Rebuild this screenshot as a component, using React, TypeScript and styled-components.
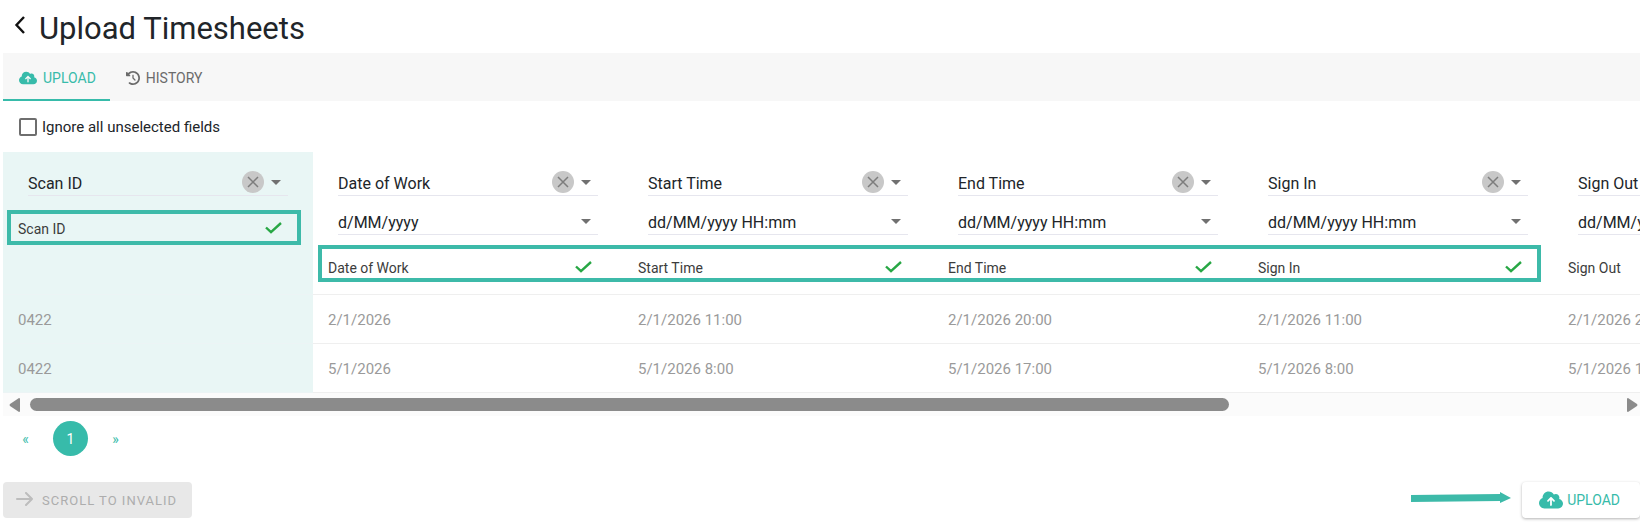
import React, { useState } from "react";
import styled, { createGlobalStyle, css } from "styled-components";
import { FaCloudArrowUp, FaClockRotateLeft } from "react-icons/fa6";

const teal = "#37bbaa";

const GlobalStyle = createGlobalStyle`
  *, *::before, *::after { box-sizing: border-box; }
  body {
    margin: 0;
    background: #fff;
    color: #212529;
    font-family: Roboto, "Liberation Sans", sans-serif;
    font-size: 16px;
    overflow-x: hidden;
  }
  button, select, input { font: inherit; color: inherit; }
  button { border: 0; background: none; padding: 0; cursor: pointer; }
`;

const Page = styled.main`
  padding-left: 3px;
`;

const Heading = styled.header`
  display: flex;
  align-items: center;
  height: 53px;
  padding: 4px 0 0 10px;
  gap: 12px;
`;

const BackButton = styled.button`
  display: flex;
  width: 14px;
  height: 24px;
  align-items: center;
  margin-bottom: 8px;
`;

const Title = styled.h1`
  margin: 0;
  font-size: 31px;
  line-height: 40px;
  font-weight: 400;
`;

const Tabs = styled.nav`
  display: flex;
  height: 48px;
  background: #f7f7f7;
`;

const Tab = styled.button<{ $active?: boolean }>`
  display: flex;
  align-items: center;
  gap: 6px;
  padding: 3px 14px 0 16px;
  font-size: 14px;
  color: ${(p) => (p.$active ? teal : "#6b6b6b")};
  border-bottom: 2px solid ${(p) => (p.$active ? teal : "transparent")};
`;

const IgnoreRow = styled.label`
  display: flex;
  align-items: center;
  gap: 5px;
  height: 51px;
  padding: 1px 0 0 16px;
  font-size: 15px;
`;

const Checkbox = styled.input`
  appearance: none;
  width: 18px;
  height: 18px;
  margin: 0;
  border: 2px solid #6e6e6e;
  border-radius: 2px;
  &:checked { background: ${teal}; border-color: ${teal}; }
`;

const TableArea = styled.div`
  position: relative;
  overflow: hidden;
`;

const Table = styled.table`
  table-layout: fixed;
  width: 1860px;
  border-collapse: separate;
  border-spacing: 0;
`;

const cell = css<{ $pinned?: boolean }>`
  width: 310px;
  text-align: left;
  font-weight: 400;
  border-bottom: 1px solid ${(p) => (p.$pinned ? "#ecf4f5" : "#efefef")};
  background: ${(p) => (p.$pinned ? "#e9f6f5" : "#fff")};
`;

const HeadCell = styled.th<{ $pinned?: boolean }>`
  ${cell}
  height: 143px;
  padding: 18px 25px 0;
  vertical-align: top;
`;

const DataCell = styled.td<{ $pinned?: boolean }>`
  ${cell}
  height: 49px;
  padding: 2px 15px 0;
  font-size: 15px;
  color: #9a9a9a;
`;

const Field = styled.div<{ $spaced?: boolean }>`
  display: grid;
  grid-template-columns: 1fr 22px 24px;
  align-items: center;
  height: ${(p) => (p.$spaced ? 39 : 26)}px;
  padding-top: ${(p) => (p.$spaced ? 13 : 0)}px;
  border-bottom: 1px solid #e6e6ee;
`;

const Select = styled.select`
  grid-area: 1 / 1 / 2 / 4;
  appearance: none;
  border: 0;
  padding: 2px 0 0;
  background: transparent;
  line-height: 22px;
  outline: none;
`;

const ClearButton = styled.button`
  grid-area: 1 / 2;
  display: flex;
  align-items: center;
  justify-content: center;
  width: 22px;
  height: 22px;
  margin-bottom: 2px;
  border-radius: 50%;
  background: #c8c8c8;
`;

const Caret = styled.svg`
  grid-area: 1 / 3;
  justify-self: center;
  width: 10px;
  height: 5px;
  margin-bottom: 1px;
  pointer-events: none;
`;

const MatchedName = styled.div`
  display: flex;
  align-items: center;
  justify-content: space-between;
  height: 26px;
  margin: 20px -10px 0;
  padding-right: 16px;
  font-size: 14px;
  color: #3c3c3c;
  svg { margin-bottom: 3px; }
`;

const Highlight = styled.div<{ $x: number; $y: number; $w: number; $h: number }>`
  position: absolute;
  left: ${(p) => p.$x}px;
  top: ${(p) => p.$y}px;
  width: ${(p) => p.$w}px;
  height: ${(p) => p.$h}px;
  border: 4px solid #3dbaa9;
  pointer-events: none;
`;

const ScrollBar = styled.div`
  display: flex;
  align-items: center;
  gap: 10px;
  height: 23px;
  padding: 0 2px 0 6px;
  background: #fbfbfb;
`;

const Track = styled.div`
  flex: 1;
`;

/* Share of the table's full width that is in view. */
const Thumb = styled.div`
  width: calc(100% * 1637 / 2166);
  height: 13px;
  border-radius: 7px;
  background: #8b8b8b;
`;

const Pagination = styled.nav`
  display: flex;
  align-items: center;
  gap: 10px;
  padding: 5px 0 0 5px;
  color: ${teal};
  font-size: 14px;
`;

const PageButton = styled.button<{ $current?: boolean }>`
  width: 35px;
  height: 35px;
  border-radius: 50%;
  ${(p) => p.$current && css`background: ${teal}; color: #fff;`}
`;

const Actions = styled.footer`
  display: flex;
  align-items: center;
  justify-content: space-between;
  padding: 26px 0 7px;
`;

const ActionButton = styled.button`
  display: flex;
  align-items: center;
  height: 36px;
  border-radius: 4px;
  font-size: 14px;
`;

const ScrollButton = styled(ActionButton)`
  gap: 9px;
  padding: 0 15px 0 13px;
  font-size: 13px;
  letter-spacing: 1px;
  background: #e8e8e8;
  color: #adadad;
  svg { margin-bottom: 2px; }
`;

const UploadGroup = styled.div`
  display: flex;
  align-items: center;
  gap: 11px;
`;

const UploadButton = styled(ActionButton)`
  gap: 4px;
  padding: 0 20px 0 17px;
  color: ${teal};
  background: #fff;
  box-shadow: 0 1px 3px rgba(0, 0, 0, 0.3);
`;

type Column = { name: string; format?: string; values: [string, string] };

const dateTime = "dd/MM/yyyy HH:mm";
const columns: Column[] = [
  { name: "Scan ID", values: ["0422", "0422"] },
  { name: "Date of Work", format: "d/MM/yyyy", values: ["2/1/2026", "5/1/2026"] },
  { name: "Start Time", format: dateTime, values: ["2/1/2026 11:00", "5/1/2026 8:00"] },
  { name: "End Time", format: dateTime, values: ["2/1/2026 20:00", "5/1/2026 17:00"] },
  { name: "Sign In", format: dateTime, values: ["2/1/2026 11:00", "5/1/2026 8:00"] },
  { name: "Sign Out", format: dateTime, values: ["2/1/2026 20:00", "5/1/2026 17:00"] },
];

function DownCaret() {
  return (
    <Caret viewBox="0 0 10 5" aria-hidden="true">
      <path d="M0 0h10L5 5z" fill="#707070" />
    </Caret>
  );
}

function CheckMark() {
  return (
    <svg width="17" height="12" viewBox="0 0 17 12" fill="none" stroke="#28a745" strokeWidth="2.4" aria-hidden="true">
      <path d="M1 5.5L6 10.2L16 1" />
    </svg>
  );
}

function ColumnHead({ column, pinned }: { column: Column; pinned: boolean }) {
  return (
    <HeadCell $pinned={pinned} scope="col">
      <Field>
        <Select aria-label={`Field for ${column.name}`} defaultValue={column.name}>
          <option>{column.name}</option>
        </Select>
        <ClearButton type="button" aria-label={`Clear ${column.name}`}>
          <svg width="12" height="12" viewBox="0 0 12 12" stroke="#7d7d7d" strokeWidth="1.5">
            <path d="M1 1l10 10M11 1L1 11" />
          </svg>
        </ClearButton>
        <DownCaret />
      </Field>
      {column.format && (
        <Field $spaced>
          <Select aria-label={`Format for ${column.name}`} defaultValue={column.format}>
            <option>{column.format}</option>
          </Select>
          <DownCaret />
        </Field>
      )}
      <MatchedName>
        {column.name}
        <CheckMark />
      </MatchedName>
    </HeadCell>
  );
}

export default function App() {
  const [ignore, setIgnore] = useState(false);
  return (
    <Page>
      <GlobalStyle />
      <Heading>
        <BackButton type="button" aria-label="Back">
          <svg width="14" height="20" viewBox="0 0 14 20" fill="none" stroke="#111" strokeWidth="2.4">
            <path d="M11 2L3.5 10L11 18" />
          </svg>
        </BackButton>
        <Title>Upload Timesheets</Title>
      </Heading>
      <Tabs>
        <Tab type="button" $active><FaCloudArrowUp size={18} />UPLOAD</Tab>
        <Tab type="button"><FaClockRotateLeft size={14} />HISTORY</Tab>
      </Tabs>
      <IgnoreRow>
        <Checkbox type="checkbox" checked={ignore} onChange={(e) => setIgnore(e.target.checked)} />
        Ignore all unselected fields
      </IgnoreRow>
      <TableArea>
        <Table>
          <thead>
            <tr>
              {columns.map((c, i) => <ColumnHead key={c.name} column={c} pinned={i === 0} />)}
            </tr>
          </thead>
          <tbody>
            {[0, 1].map((row) => (
              <tr key={row}>
                {columns.map((c, i) => (
                  <DataCell key={c.name} $pinned={i === 0}>{c.values[row]}</DataCell>
                ))}
              </tr>
            ))}
          </tbody>
        </Table>
        <Highlight $x={4} $y={58} $w={294} $h={35} />
        <Highlight $x={315} $y={93} $w={1223} $h={37} />
      </TableArea>
      <ScrollBar>
        <svg width="11" height="14" viewBox="0 0 11 14" fill="#8b8b8b">
          <path d="M11 1v12q0 1-1 1L1 8q-1-1 0-2L10 0q1 0 1 1z" />
        </svg>
        <Track><Thumb /></Track>
        <svg width="11" height="14" viewBox="0 0 11 14" fill="#8b8b8b">
          <path d="M0 1v12q0 1 1 1l9-6q1-1 0-2L1 0Q0 0 0 1z" />
        </svg>
      </ScrollBar>
      <Pagination aria-label="Pages">
        <PageButton type="button">«</PageButton>
        <PageButton type="button" $current>1</PageButton>
        <PageButton type="button">»</PageButton>
      </Pagination>
      <Actions>
        <ScrollButton type="button">
          <svg width="17" height="14" viewBox="0 0 17 14" fill="none" stroke="#bdbdbd" strokeWidth="2" strokeLinecap="round" strokeLinejoin="round">
            <path d="M1 7h15M10 1l6 6-6 6" />
          </svg>
          SCROLL TO INVALID
        </ScrollButton>
        <UploadGroup>
          <svg width="100" height="16" viewBox="0 0 100 16" fill="#3dbaa9">
            <path d="M0 3L89 2V0L100 6L89 11V9L0 10z" />
          </svg>
          <UploadButton type="button"><FaCloudArrowUp size={24} />UPLOAD</UploadButton>
        </UploadGroup>
      </Actions>
    </Page>
  );
}
